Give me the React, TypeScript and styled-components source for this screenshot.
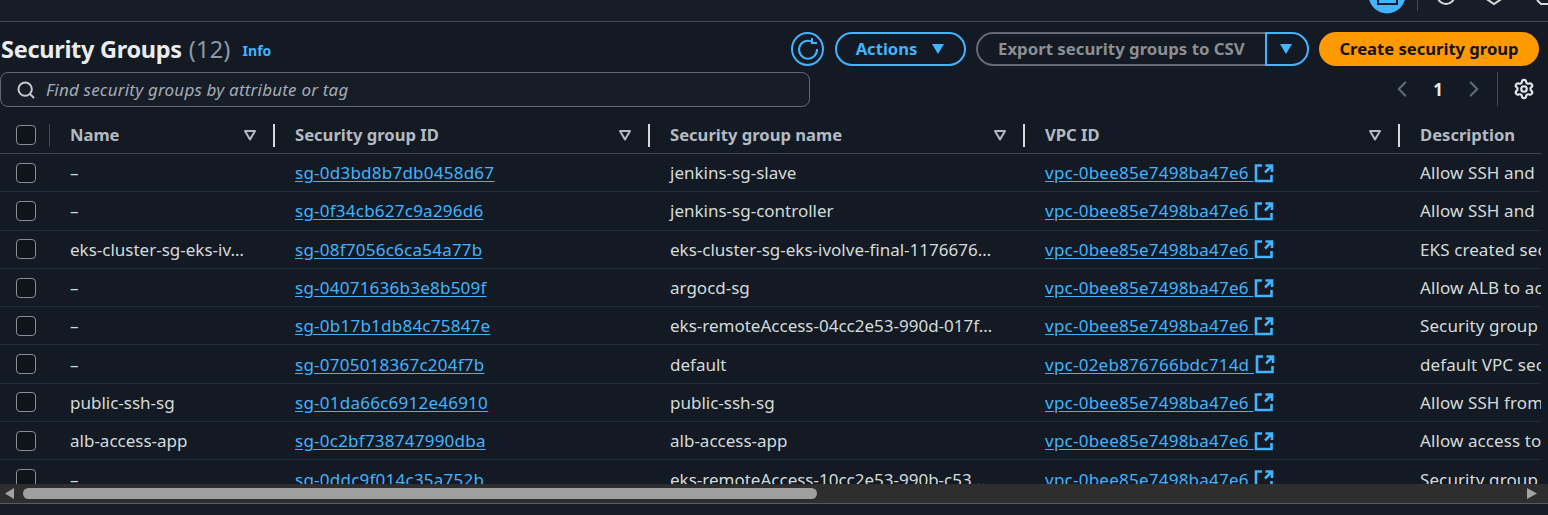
import styled, { createGlobalStyle } from 'styled-components';
import { Search, Settings, ChevronLeft, ChevronRight } from 'lucide-react';

const GlobalStyle = createGlobalStyle`
  html, body {
    margin: 0;
    padding: 0;
    background: #161d26;
    overflow: hidden;
  }
  * {
    box-sizing: border-box;
  }
`;

const Page = styled.div`
  width: 1548px;
  height: 515px;
  display: flex;
  flex-direction: column;
  overflow: hidden;
  background: #131a23;
  color: #d5dbdb;
  font-family: 'Noto Sans', 'Open Sans', sans-serif;
  font-size: 17px;
`;

const TopBar = styled.div`
  height: 22px;
  flex: none;
  display: flex;
  justify-content: flex-end;
  align-items: flex-end;
  background: #161d26;
  border-bottom: 1px solid #414750;
  overflow: hidden;
`;

const TopIcon = styled.svg`
  display: block;
  flex: none;
`;

const TopDivider = styled.span`
  width: 1px;
  height: 11px;
  margin-left: 12px;
  align-self: flex-start;
  background: #414750;
`;

const HeaderRow = styled.div`
  height: 50px;
  flex: none;
  display: flex;
  align-items: center;
  padding: 4px 9px 0 1px;
`;

const Title = styled.h1`
  margin: 0;
  font-size: 23.5px;
  font-weight: 700;
  color: #eaeded;
  letter-spacing: -0.3px;
`;

const Count = styled.span`
  font-weight: 400;
  color: #8d99a8;
  margin-left: 7px;
  letter-spacing: 0.2px;
`;

const InfoLink = styled.a`
  margin: 3px 0 0 12px;
  font-size: 14px;
  font-weight: 700;
  color: #42b4ff;
`;

const Actions = styled.div`
  margin-left: auto;
  display: flex;
  align-items: center;
`;

const RefreshButton = styled.button`
  width: 33px;
  height: 34px;
  margin-right: 11px;
  padding: 0;
  display: flex;
  align-items: center;
  justify-content: center;
  background: transparent;
  border: 2px solid #42b4ff;
  border-radius: 50%;
  color: #42b4ff;
`;

const PillButton = styled.button`
  height: 34px;
  width: 131px;
  margin-right: 10px;
  padding: 0 0 2px;
  display: flex;
  align-items: center;
  justify-content: center;
  gap: 14px;
  background: transparent;
  border: 2px solid #42b4ff;
  border-radius: 17px;
  color: #42b4ff;
  font: 700 16.6px 'Noto Sans', sans-serif;

  svg {
    margin-top: 2px;
  }
`;

const SplitLeft = styled.button`
  height: 34px;
  width: 289px;
  padding: 0 0 2px 20px;
  text-align: left;
  background: transparent;
  border: 2px solid #656871;
  border-right: none;
  border-radius: 17px 0 0 17px;
  color: #8c8e94;
  font: 700 16.8px 'Noto Sans', sans-serif;
`;

const SplitRight = styled.button`
  height: 34px;
  width: 44px;
  margin-right: 10px;
  padding: 0 3px 0 0;
  display: flex;
  align-items: center;
  justify-content: center;
  background: transparent;
  border: 2px solid #42b4ff;
  border-radius: 0 17px 17px 0;
`;

const PrimaryButton = styled.button`
  height: 34px;
  width: 220px;
  padding: 0 0 2px;
  background: #ff9900;
  border: none;
  border-radius: 17px;
  color: #0f141a;
  font: 700 16.6px 'Noto Sans', sans-serif;
`;

const FilterRow = styled.div`
  height: 45px;
  flex: none;
  display: flex;
  align-items: flex-start;
`;

const SearchBox = styled.div`
  width: 810px;
  height: 35px;
  display: flex;
  align-items: center;
  gap: 10px;
  padding-left: 15px;
  background: #161d26;
  border: 1px solid #656871;
  border-radius: 8px;
  color: #a4abb5;
  font-style: italic;
  letter-spacing: 0.2px;
`;

const Pager = styled.div`
  margin-left: auto;
  height: 34px;
  display: flex;
  align-items: center;
  padding-right: 13px;
  color: #5f6b7a;
`;

const PageNumber = styled.span`
  width: 46px;
  text-align: center;
  color: #eaeded;
  font-weight: 700;
`;

const PagerDivider = styled.span`
  width: 1px;
  height: 34px;
  margin: 0 15px 0 10px;
  background: #414750;
`;

const TableClip = styled.div`
  width: 1541px;
  height: 367px;
  flex: none;
  overflow: hidden;
`;

const Row = styled.div`
  display: grid;
  grid-template-columns: 50px 225px 375px 375px 375px 141px;
  width: 1541px;
`;

const HeadRow = styled(Row)`
  height: 37px;
  border-bottom: 1px solid #414750;
`;

const BodyRow = styled(Row)`
  height: 38.3px;
  border-bottom: 1px solid #232b37;
`;

const HeadCell = styled.div`
  display: flex;
  align-items: center;
  justify-content: space-between;
  padding: 0 16px 0 20px;
  border-right: 2px solid #d5dbdb;
  height: 23px;
  align-self: center;
  color: #b4bac2;
  font-size: 16.6px;
  font-weight: 700;
  white-space: nowrap;
`;

const HeadLabel = styled.span`
  margin-bottom: 2px;
`;

const LastHeadCell = styled(HeadCell)`
  border-right: none;
`;

const CheckCell = styled.div`
  display: flex;
  align-items: center;
  padding-left: 16px;
`;

const CheckHeadCell = styled(CheckCell)`
  height: 23px;
  align-self: center;
  border-right: 1px solid #414750;
`;

const Checkbox = styled.span`
  width: 20px;
  height: 20px;
  border: 1px solid #8c8c94;
  border-radius: 4px;
  background: #0f141a;
`;

const Cell = styled.div`
  display: flex;
  align-items: center;
  min-width: 0;
  padding: 0 20px;
  white-space: nowrap;
  overflow: hidden;
  color: #d5dbdb;
`;

const DescCell = styled(Cell)`
  letter-spacing: 0.1px;
`;

const IdLink = styled.a`
  color: #42b4ff;
  letter-spacing: 0.24px;
  text-decoration: underline;
  text-underline-offset: 2px;
`;

const ExternalIcon = styled.svg`
  margin-left: 1px;
  flex: none;
`;

const Scrollbar = styled.div`
  height: 20px;
  flex: none;
  display: flex;
  align-items: center;
  justify-content: space-between;
  padding: 0 11px 0 5px;
  background: #2e2e2e;
  border-bottom: 1px solid #5a5a5a;
`;

const Arrow = styled.svg`
  flex: none;
`;

const Thumb = styled.div`
  width: 794px;
  height: 11px;
  margin-left: 8px;
  margin-right: auto;
  border-radius: 6px;
  background: #9f9f9f;
`;

const Footer = styled.div`
  flex: 1;
  background: #161d26;
`;

const FilterCaret = () => (
  <svg width="14" height="12" viewBox="0 0 14 12" fill="none">
    <path d="M2 2h10L7 10.5z" stroke="#b4bac2" strokeWidth="2" strokeLinejoin="round" />
  </svg>
);

const SolidCaret = () => (
  <svg width="14" height="12" viewBox="0 0 14 12">
    <path d="M1 1h12L7 11z" fill="#42b4ff" />
  </svg>
);

const External = () => (
  <ExternalIcon width="20" height="20" viewBox="0 0 20 20" fill="none" stroke="#42b4ff" strokeWidth="2.6">
    <path d="M8 2.5H2v15.5h15.5v-6" />
    <path d="M11.5 2.5h6.5V9M17.5 3l-6.5 6.5" />
  </ExternalIcon>
);

const rows = [
  { name: '–', id: 'sg-0d3bd8b7db0458d67', group: 'jenkins-sg-slave', vpc: 'vpc-0bee85e7498ba47e6', desc: 'Allow SSH and' },
  { name: '–', id: 'sg-0f34cb627c9a296d6', group: 'jenkins-sg-controller', vpc: 'vpc-0bee85e7498ba47e6', desc: 'Allow SSH and' },
  { name: 'eks-cluster-sg-eks-iv…', id: 'sg-08f7056c6ca54a77b', group: 'eks-cluster-sg-eks-ivolve-final-1176676…', vpc: 'vpc-0bee85e7498ba47e6', desc: 'EKS created security' },
  { name: '–', id: 'sg-04071636b3e8b509f', group: 'argocd-sg', vpc: 'vpc-0bee85e7498ba47e6', desc: 'Allow ALB to access' },
  { name: '–', id: 'sg-0b17b1db84c75847e', group: 'eks-remoteAccess-04cc2e53-990d-017f…', vpc: 'vpc-0bee85e7498ba47e6', desc: 'Security group' },
  { name: '–', id: 'sg-0705018367c204f7b', group: 'default', vpc: 'vpc-02eb876766bdc714d', desc: 'default VPC security' },
  { name: 'public-ssh-sg', id: 'sg-01da66c6912e46910', group: 'public-ssh-sg', vpc: 'vpc-0bee85e7498ba47e6', desc: 'Allow SSH from' },
  { name: 'alb-access-app', id: 'sg-0c2bf738747990dba', group: 'alb-access-app', vpc: 'vpc-0bee85e7498ba47e6', desc: 'Allow access to' },
  { name: '–', id: 'sg-0ddc9f014c35a752b', group: 'eks-remoteAccess-10cc2e53-990b-c53…', vpc: 'vpc-0bee85e7498ba47e6', desc: 'Security group' },
];

const App = () => {
  return (
    <Page>
      <GlobalStyle />
      <TopBar>
        <TopIcon width="50" height="21" viewBox="0 0 50 21">
          <circle cx="32" cy="-5" r="18.5" fill="#42b4ff" />
          <path d="M23 -8h19v12H23z" fill="none" stroke="#161d26" strokeWidth="2" />
        </TopIcon>
        <TopDivider />
        <TopIcon width="52" height="21" viewBox="0 0 52 21">
          <circle cx="28" cy="-4.5" r="8.5" fill="none" stroke="#d5dbdb" strokeWidth="2" />
        </TopIcon>
        <TopIcon width="57" height="21" viewBox="0 0 57 21">
          <path d="M15 -2l9 6 9-6" fill="none" stroke="#d5dbdb" strokeWidth="2" />
        </TopIcon>
        <TopIcon width="21" height="21" viewBox="0 0 21 21">
          <path d="M10 0l4 4h7" fill="none" stroke="#d5dbdb" strokeWidth="2" />
        </TopIcon>
      </TopBar>
      <HeaderRow>
        <Title>
          Security Groups<Count>(12)</Count>
        </Title>
        <InfoLink>Info</InfoLink>
        <Actions>
          <RefreshButton>
            <svg width="24" height="24" viewBox="0 0 24 24" fill="none" stroke="#42b4ff" strokeWidth="2">
              <path d="M15 4.2A9 9 0 1 0 21 12" />
              <path d="M16 1v5h5" />
            </svg>
          </RefreshButton>
          <PillButton>
            Actions
            <SolidCaret />
          </PillButton>
          <SplitLeft>Export security groups to CSV</SplitLeft>
          <SplitRight>
            <SolidCaret />
          </SplitRight>
          <PrimaryButton>Create security group</PrimaryButton>
        </Actions>
      </HeaderRow>
      <FilterRow>
        <SearchBox>
          <Search size={20} color="#c6c6cd" strokeWidth={2.4} />
          Find security groups by attribute or tag
        </SearchBox>
        <Pager>
          <ChevronLeft size={26} strokeWidth={2} />
          <PageNumber>1</PageNumber>
          <ChevronRight size={26} strokeWidth={2} />
          <PagerDivider />
          <Settings size={22} color="#e0e4e8" strokeWidth={2.4} />
        </Pager>
      </FilterRow>
      <TableClip>
        <HeadRow>
          <CheckHeadCell>
            <Checkbox />
          </CheckHeadCell>
          <HeadCell>
            <HeadLabel>Name</HeadLabel>
            <FilterCaret />
          </HeadCell>
          <HeadCell>
            <HeadLabel>Security group ID</HeadLabel>
            <FilterCaret />
          </HeadCell>
          <HeadCell>
            <HeadLabel>Security group name</HeadLabel>
            <FilterCaret />
          </HeadCell>
          <HeadCell>
            <HeadLabel>VPC ID</HeadLabel>
            <FilterCaret />
          </HeadCell>
          <LastHeadCell>
            <HeadLabel>Description</HeadLabel>
          </LastHeadCell>
        </HeadRow>
        {rows.map((row) => (
          <BodyRow key={row.id}>
            <CheckCell>
              <Checkbox />
            </CheckCell>
            <Cell>{row.name}</Cell>
            <Cell>
              <IdLink>{row.id}</IdLink>
            </Cell>
            <Cell>{row.group}</Cell>
            <Cell>
              <IdLink>{row.vpc}&nbsp;</IdLink>
              <External />
            </Cell>
            <DescCell>{row.desc}</DescCell>
          </BodyRow>
        ))}
      </TableClip>
      <Scrollbar>
        <Arrow width="10" height="11" viewBox="0 0 10 11">
          <path d="M9 0v11L0 5.5z" fill="#a3a3a3" />
        </Arrow>
        <Thumb />
        <Arrow width="10" height="11" viewBox="0 0 10 11">
          <path d="M0 0v11l10-5.5z" fill="#a3a3a3" />
        </Arrow>
      </Scrollbar>
      <Footer />
    </Page>
  );
};

export default App;
